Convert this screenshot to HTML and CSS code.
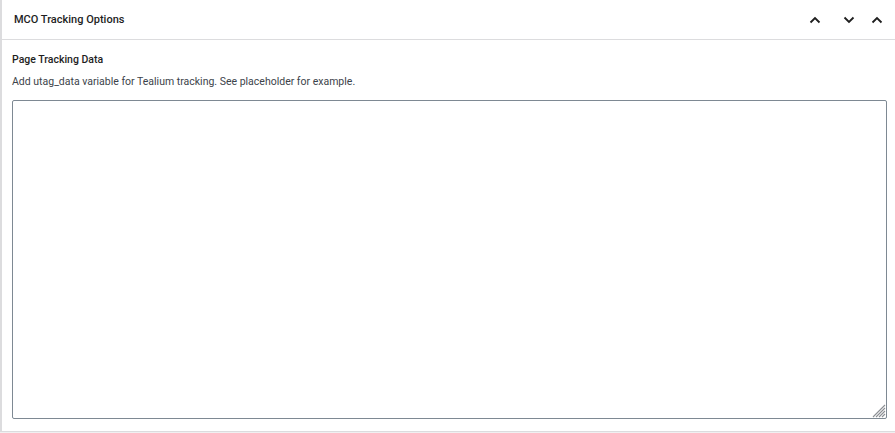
FILE: index.html
```html
<!DOCTYPE html>
<html lang="en">
<head>
<meta charset="utf-8">
<title>MCO Tracking Options</title>
<link rel="stylesheet" href="styles.css">
</head>
<body>
<div class="postbox">
  <div class="postbox-header">
    <h2 class="hndle">MCO Tracking Options</h2>
    <div class="handle-actions">
      <button class="handle-btn" type="button" aria-label="Move up">
        <svg width="12" height="8" viewBox="0 0 12 8"><path d="M1.5 6.5 6 2l4.5 4.5" fill="none" stroke="#1e1e1e" stroke-width="1.8"/></svg>
      </button>
      <button class="handle-btn" type="button" aria-label="Move down">
        <svg width="12" height="8" viewBox="0 0 12 8"><path d="M1.5 1.5 6 6l4.5-4.5" fill="none" stroke="#1e1e1e" stroke-width="1.8"/></svg>
      </button>
      <button class="handle-btn toggle" type="button" aria-label="Toggle panel">
        <svg width="12" height="8" viewBox="0 0 12 8"><path d="M1.5 6.5 6 2l4.5 4.5" fill="none" stroke="#1e1e1e" stroke-width="1.8"/></svg>
      </button>
    </div>
  </div>
  <div class="inside">
    <label class="field-label" for="utag">Page Tracking Data</label>
    <p class="field-desc">Add utag_data variable for Tealium tracking. See placeholder for example.</p>
    <div class="field-wrap">
      <textarea id="utag" class="field-input"></textarea>
      <svg class="grip" width="14" height="14" viewBox="0 0 14 14" aria-hidden="true">
        <path d="M13 1 1 13M13 4 4 13M13 7 7 13M13 10l-3 3" stroke="#8c8f94" stroke-width="1.1" fill="none"/>
      </svg>
    </div>
  </div>
</div>
</body>
</html>
```

FILE: styles.css
```css
* { box-sizing: border-box; }

html, body {
  margin: 0;
  height: 100%;
}

body {
  background: #f0f0f1;
  font-family: Roboto, "Noto Sans", "Liberation Sans", sans-serif;
  color: #1e1e1e;
  overflow: hidden;
}

.postbox {
  background: #fff;
  border-left: 2px solid #dcdcde;
  border-bottom: 1px solid #dcdcde;
  height: 432px;
  display: flex;
  flex-direction: column;
}

.postbox-header {
  height: 40px;
  border-bottom: 1px solid #dcdcde;
  display: flex;
  align-items: center;
  justify-content: space-between;
  padding-left: 12px;
}

.hndle {
  margin: 0;
  font-size: 11px;
  font-weight: 500;
  color: #1e1e1e;
}

.handle-actions {
  display: flex;
  align-items: center;
  height: 100%;
  padding-right: 4px;
}

.handle-btn {
  border: 0;
  background: none;
  padding: 0;
  width: 28px;
  height: 36px;
  display: flex;
  align-items: center;
  justify-content: center;
  cursor: pointer;
}

.handle-btn:first-child { margin-right: 6px; }

.inside {
  flex: 1;
  display: flex;
  flex-direction: column;
  padding: 12px 8px 12px 10px;
}

.field-label {
  font-size: 10.5px;
  font-weight: 500;
  line-height: 16px;
  color: #1e1e1e;
}

.field-desc {
  margin: 6px 0 10px;
  font-size: 10.5px;
  line-height: 16px;
  color: #3c434a;
}

.field-wrap {
  flex: 1;
  position: relative;
  display: flex;
}

.field-input {
  flex: 1;
  width: 100%;
  resize: none;
  border: 1px solid #7e8993;
  border-radius: 2px;
  background: #fff;
  font: inherit;
}

.grip {
  position: absolute;
  right: 1px;
  bottom: 1px;
}
```
